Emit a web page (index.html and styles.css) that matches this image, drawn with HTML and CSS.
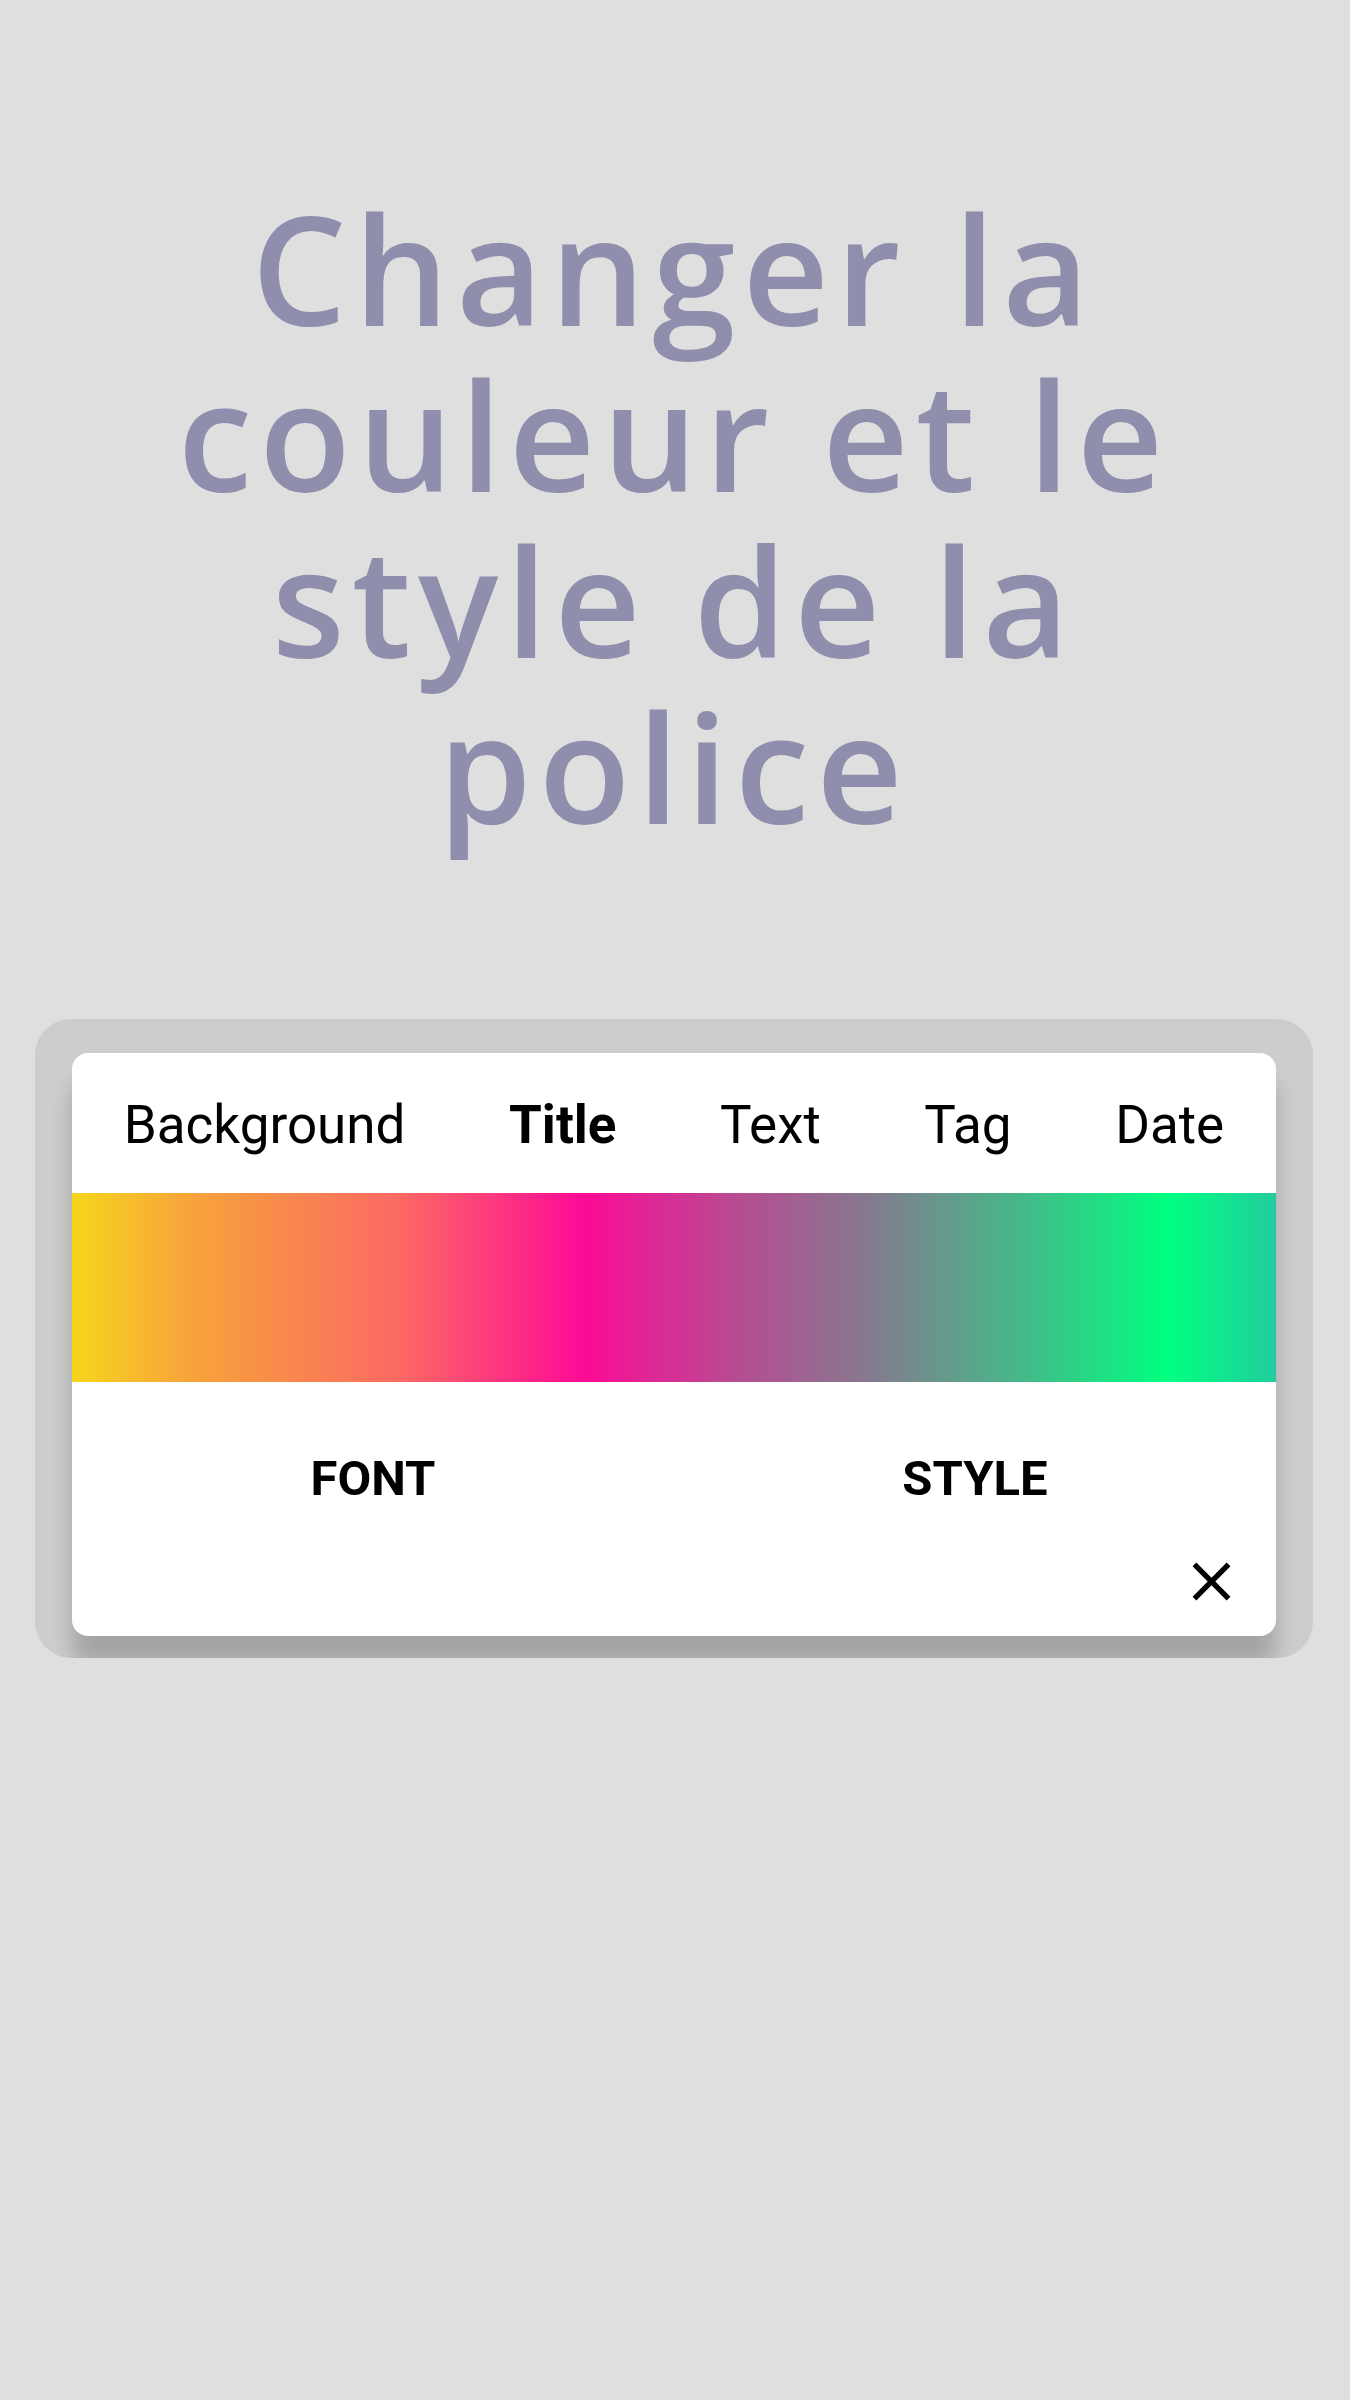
FILE: index.html
```html
<!DOCTYPE html>
<html lang="fr">
<head>
<meta charset="utf-8">
<title>Changer la couleur et le style de la police</title>
<link rel="stylesheet" href="styles.css">
</head>
<body>
<main class="page">
  <h1 class="headline">Changer la couleur et le style de la police</h1>

  <section class="panel">
    <div class="card">
      <nav class="tabs">
        <span class="tab">Background</span>
        <span class="tab tab-active">Title</span>
        <span class="tab">Text</span>
        <span class="tab">Tag</span>
        <span class="tab">Date</span>
      </nav>
      <div class="spectrum"></div>
      <div class="actions">
        <button class="action">FONT</button>
        <button class="action">STYLE</button>
      </div>
      <div class="close-row">
        <button class="close" aria-label="Close">
          <svg viewBox="0 0 24 24" width="65" height="65"><path d="M19 6.41L17.59 5 12 10.59 6.41 5 5 6.41 10.59 12 5 17.59 6.41 19 12 13.41 17.59 19 19 17.59 13.41 12z" fill="#000"/></svg>
        </button>
      </div>
    </div>
  </section>
</main>
</body>
</html>
```

FILE: styles.css
```css
html, body {
  margin: 0;
  padding: 0;
  background: #dfdfdf;
}

body {
  font-family: Roboto, "Liberation Sans", sans-serif;
  color: #000;
}

.page {
  padding: 185px 37px 0 35px;
}

.headline {
  margin: 0 auto;
  max-width: 1060px;
  font-family: "Open Sans", "Noto Sans", sans-serif;
  font-weight: 600;
  font-size: 150px;
  line-height: 166px;
  letter-spacing: 7px;
  color: #8f8eac;
  text-align: center;
}

.panel {
  margin-top: 170px;
  background: #cdcdcd;
  border-radius: 36px;
  padding: 34px 37px 22px;
  overflow: hidden;
}

.card {
  background: #fff;
  border-radius: 16px;
  overflow: hidden;
  box-shadow: 0 30px 22px rgba(0, 0, 0, 0.2);
}

.tabs {
  display: flex;
  justify-content: space-around;
  align-items: center;
  height: 140px;
  padding-top: 4px;
  box-sizing: border-box;
}

.tab {
  font-size: 53px;
  font-weight: 400;
}

.tab-active {
  font-weight: 700;
}

.spectrum {
  height: 189px;
  background: linear-gradient(90deg,
    #f6d51c 0%,
    #f7a33b 10%,
    #fb6a63 27%,
    #fd0a96 42.5%,
    #b84b92 55%,
    #86798f 66%,
    #3fbf88 80%,
    #00ff80 91%,
    #22cd9f 100%);
}

.actions {
  display: flex;
  margin-top: 36px;
  height: 120px;
}

.action {
  flex: 1;
  border: 0;
  background: none;
  font-family: Roboto, "Liberation Sans", sans-serif;
  font-weight: 700;
  font-size: 49px;
  color: #000;
  padding: 0;
}

.close-row {
  display: flex;
  justify-content: flex-end;
  align-items: center;
  height: 98px;
  padding: 0 32px 12px 0;
  box-sizing: border-box;
}

.close {
  border: 0;
  background: none;
  padding: 0;
  width: 65px;
  height: 65px;
  display: flex;
}
```
